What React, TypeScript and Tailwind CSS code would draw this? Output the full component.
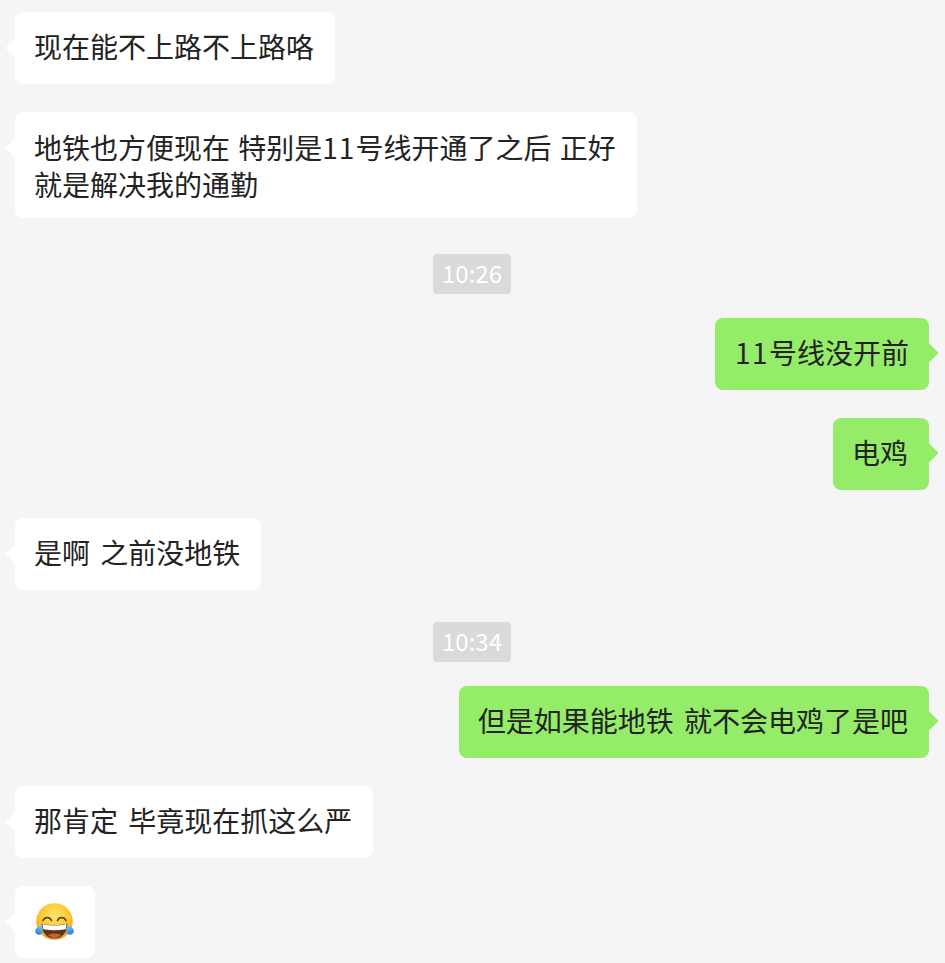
const font = "font-['Noto_Sans_CJK_SC','Noto_Sans',sans-serif]";
const oneLine = "pb-[21px] pt-[17px] leading-[34px] [word-spacing:4px]";

const LaughEmoji = () => (
  <svg width="42" height="38" viewBox="0 0 42 38" className="block">
    <defs>
      <radialGradient id="face" cx="50%" cy="35%" r="65%">
        <stop offset="0%" stopColor="#fee46a" />
        <stop offset="65%" stopColor="#fcc52f" />
        <stop offset="100%" stopColor="#f09a30" />
      </radialGradient>
      <linearGradient id="tear" x1="0" y1="0" x2="0" y2="1">
        <stop offset="0%" stopColor="#8fcbf5" />
        <stop offset="100%" stopColor="#2a7bd4" />
      </linearGradient>
    </defs>
    <circle cx="20.500" cy="18.500" r="18.300" fill="url(#face)" />
    <path d="M9 17.500c1.800-4 6.700-4 8.500 0" fill="none" stroke="#5c3a1c" strokeWidth="1.600" strokeLinecap="round" />
    <path d="M23.500 17.500c1.800-4 6.700-4 8.500 0" fill="none" stroke="#5c3a1c" strokeWidth="1.600" strokeLinecap="round" />
    <path d="M7.500 20.500c8.500 2.300 17.500 2.300 26 0 .3 8.800-5.500 15-13 15s-13.300-6.200-13-15z" fill="#5f3414" />
    <path d="M8.500 21c8 2 16 2 24 0 0 2-.4 3.600-1 5.200-7 1.500-15 1.500-22 0-.6-1.600-1-3.200-1-5.200z" fill="#fff" />
    <path d="M14 32c4-2 9-2 13 0-2 2-4 2.900-6.500 2.900s-4.500-.9-6.500-2.900z" fill="#c9602f" />
    <path d="M5.500 21.500c1.900 2.400 3.800 4.300 3.800 6.500a3.800 3.800 0 0 1-7.600 0c0-2.200 1.900-4.100 3.800-6.500z" fill="url(#tear)" transform="rotate(25 5.500 27)" />
    <path d="M35.500 21.500c1.900 2.400 3.800 4.300 3.800 6.500a3.800 3.800 0 0 1-7.600 0c0-2.200 1.900-4.100 3.800-6.500z" fill="url(#tear)" transform="rotate(-25 35.500 27)" />
  </svg>
);

const Bubble = ({ side, children, className }: { side: "left" | "right"; children: React.ReactNode; className: string }) => {
  if (side === "left") {
    return (
      <div className={`relative w-fit self-start rounded-lg bg-white text-[28px] text-[#232323] ${className}`}>
        <span className="absolute left-[-7px] top-[29px] size-[14px] rotate-45 rounded-[2px] bg-white [clip-path:polygon(0_100%,0_0,100%_100%)]" />
        <span className="relative">{children}</span>
      </div>
    );
  }
  return (
    <div className={`relative w-fit self-end rounded-lg bg-[#95ec69] text-[28px] text-[#232323] ${className}`}>
      <span className="absolute right-[-7px] top-[28px] size-[14px] rotate-45 rounded-[2px] bg-[#95ec69] [clip-path:polygon(0_0,100%_0,100%_100%)]" />
      <span className="relative">{children}</span>
    </div>
  );
};

const Time = ({ text, className }: { text: string; className: string }) => (
  <div className={`h-10 w-[78px] self-center rounded bg-[#dadada] text-center text-2xl leading-[38px] text-white ${className}`}>
    {text}
  </div>
);

export default function App() {
  return (
    <div className={`flex h-[963px] flex-col overflow-hidden bg-[#f5f5f5] pl-[15px] pr-4 pt-3 ${font}`}>
      <Bubble side="left" className={`pl-[19px] pr-[21px] ${oneLine}`}>现在能不上路不上路咯</Bubble>
      <Bubble side="left" className="mt-7 pb-[15px] pl-[19px] pr-[21px] pt-[17px] leading-[37px] [word-spacing:2px]">
        地铁也方便现在 特别是<span className="tracking-[1px]">11</span>号线开通了之后 正好
        <br />
        就是解决我的通勤
      </Bubble>
      <Time text="10:26" className="mt-9" />
      <Bubble side="right" className={`mt-6 px-5 ${oneLine}`}>
        <span className="tracking-[1.5px]">11</span>号线没开前
      </Bubble>
      <Bubble side="right" className={`mt-7 pl-[19px] pr-[21px] ${oneLine}`}>电鸡</Bubble>
      <Bubble side="left" className={`mt-7 pl-[19px] pr-[21px] ${oneLine}`}>是啊 之前没地铁</Bubble>
      <Time text="10:34" className="mt-8" />
      <Bubble side="right" className={`mt-6 pl-[19px] pr-[21px] ${oneLine}`}>但是如果能地铁 就不会电鸡了是吧</Bubble>
      <Bubble side="left" className={`mt-7 pl-[19px] pr-[21px] ${oneLine}`}>那肯定 毕竟现在抓这么严</Bubble>
      <Bubble side="left" className={`mt-7 pl-[19px] pr-[21px] ${oneLine}`}>
        <span className="block h-[34px] w-10"><LaughEmoji /></span>
      </Bubble>
    </div>
  );
}
